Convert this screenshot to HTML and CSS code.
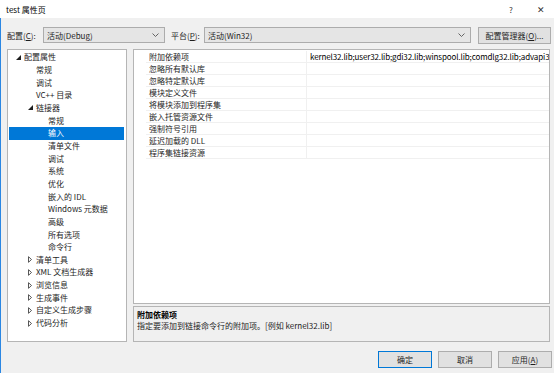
FILE: index.html
```html
<!DOCTYPE html>
<html lang="zh-CN">
<head>
<meta charset="utf-8">
<title>test 属性页</title>
<link rel="stylesheet" href="styles.css">
</head>
<body>
<div class="window">
  <div class="titlebar">
    <span class="title">test 属性页</span>
    <span class="tb-btn help">?</span>
    <span class="tb-btn close">✕</span>
  </div>
  <div class="main">
    <div class="toolbar">
      <span class="lbl lbl1">配置(<u>C</u>):</span>
      <div class="combo combo1"><span>活动(Debug)</span><svg class="chev" width="7" height="4" viewBox="0 0 7 4"><path d="M0.5 0.5 L3.5 3.5 L6.5 0.5" fill="none" stroke="#555" stroke-width="0.9"/></svg></div>
      <span class="lbl lbl2">平台(<u>P</u>):</span>
      <div class="combo combo2"><span>活动(Win32)</span><svg class="chev" width="7" height="4" viewBox="0 0 7 4"><path d="M0.5 0.5 L3.5 3.5 L6.5 0.5" fill="none" stroke="#555" stroke-width="0.9"/></svg></div>
      <div class="btn mgr">配置管理器(<u>O</u>)...</div>
    </div>
    <div class="content">
      <div class="tree">
        <div class="node l0"><span class="arr"><svg width="5" height="5" viewBox="0 0 5 5"><path d="M5 0 L5 5 L0 5 Z" fill="#1e1e1e"/></svg></span>配置属性</div>
        <div class="node l1"><span class="arr"></span>常规</div>
        <div class="node l1"><span class="arr"></span>调试</div>
        <div class="node l1"><span class="arr"></span>VC++ 目录</div>
        <div class="node l1"><span class="arr"><svg width="5" height="5" viewBox="0 0 5 5"><path d="M5 0 L5 5 L0 5 Z" fill="#1e1e1e"/></svg></span>链接器</div>
        <div class="node l2"><span class="arr"></span>常规</div>
        <div class="node l2 sel"><span class="arr"></span>输入</div>
        <div class="node l2"><span class="arr"></span>清单文件</div>
        <div class="node l2"><span class="arr"></span>调试</div>
        <div class="node l2"><span class="arr"></span>系统</div>
        <div class="node l2"><span class="arr"></span>优化</div>
        <div class="node l2"><span class="arr"></span>嵌入的 IDL</div>
        <div class="node l2"><span class="arr"></span>Windows 元数据</div>
        <div class="node l2"><span class="arr"></span>高级</div>
        <div class="node l2"><span class="arr"></span>所有选项</div>
        <div class="node l2"><span class="arr"></span>命令行</div>
        <div class="node l1"><span class="arr"><svg width="4" height="7" viewBox="0 0 4 7"><path d="M0.5 0.7 L3.5 3.5 L0.5 6.3 Z" fill="none" stroke="#444" stroke-width="0.9"/></svg></span>清单工具</div>
        <div class="node l1"><span class="arr"><svg width="4" height="7" viewBox="0 0 4 7"><path d="M0.5 0.7 L3.5 3.5 L0.5 6.3 Z" fill="none" stroke="#444" stroke-width="0.9"/></svg></span>XML 文档生成器</div>
        <div class="node l1"><span class="arr"><svg width="4" height="7" viewBox="0 0 4 7"><path d="M0.5 0.7 L3.5 3.5 L0.5 6.3 Z" fill="none" stroke="#444" stroke-width="0.9"/></svg></span>浏览信息</div>
        <div class="node l1"><span class="arr"><svg width="4" height="7" viewBox="0 0 4 7"><path d="M0.5 0.7 L3.5 3.5 L0.5 6.3 Z" fill="none" stroke="#444" stroke-width="0.9"/></svg></span>生成事件</div>
        <div class="node l1"><span class="arr"><svg width="4" height="7" viewBox="0 0 4 7"><path d="M0.5 0.7 L3.5 3.5 L0.5 6.3 Z" fill="none" stroke="#444" stroke-width="0.9"/></svg></span>自定义生成步骤</div>
        <div class="node l1"><span class="arr"><svg width="4" height="7" viewBox="0 0 4 7"><path d="M0.5 0.7 L3.5 3.5 L0.5 6.3 Z" fill="none" stroke="#444" stroke-width="0.9"/></svg></span>代码分析</div>
      </div>
      <div class="right">
        <div class="grid">
          <div class="row first"><span class="gut"></span><span class="name">附加依赖项</span><span class="val libs">kernel32.lib;user32.lib;gdi32.lib;winspool.lib;comdlg32.lib;advapi3</span></div>
          <div class="row"><span class="gut"></span><span class="name">忽略所有默认库</span><span class="val"></span></div>
          <div class="row"><span class="gut"></span><span class="name">忽略特定默认库</span><span class="val"></span></div>
          <div class="row"><span class="gut"></span><span class="name">模块定义文件</span><span class="val"></span></div>
          <div class="row"><span class="gut"></span><span class="name">将模块添加到程序集</span><span class="val"></span></div>
          <div class="row"><span class="gut"></span><span class="name">嵌入托管资源文件</span><span class="val"></span></div>
          <div class="row"><span class="gut"></span><span class="name">强制符号引用</span><span class="val"></span></div>
          <div class="row"><span class="gut"></span><span class="name">延迟加载的 DLL</span><span class="val"></span></div>
          <div class="row"><span class="gut"></span><span class="name">程序集链接资源</span><span class="val"></span></div>
        </div>
        <div class="desc">
          <div class="desc-title">附加依赖项</div>
          <div class="desc-text">指定要添加到链接命令行的附加项。[例如 kernel32.lib]</div>
        </div>
      </div>
    </div>
    <div class="buttons">
      <div class="btn dlg default">确定</div>
      <div class="btn dlg">取消</div>
      <div class="btn dlg">应用(<u>A</u>)</div>
    </div>
  </div>
</div>
</body>
</html>
```

FILE: styles.css
```css
html, body {
  margin: 0;
  padding: 0;
}
body {
  width: 554px;
  height: 373px;
  overflow: hidden;
  background: #f0f0f0;
  font-family: "Noto Sans CJK SC", "Noto Sans", sans-serif;
  font-size: 8px;
  color: #1e1e1e;
}
.window {
  width: 554px;
  height: 373px;
  display: flex;
  flex-direction: column;
}
.titlebar {
  height: 18px;
  background: #ffffff;
  display: flex;
  align-items: center;
  padding-left: 6px;
  box-sizing: border-box;
}
.title {
  flex: 1;
  color: #000;
}
.tb-btn {
  color: #333;
  text-align: center;
}
.help {
  width: 10px;
  margin-right: 20px;
  font-size: 8px;
}
.close {
  width: 10px;
  margin-right: 8px;
  font-size: 9px;
}
.main {
  flex: 1;
  border-left: 1px solid #2b87e3;
  display: flex;
  flex-direction: column;
}
.toolbar {
  display: flex;
  align-items: center;
  height: 18px;
  margin-top: 8px;
  padding-left: 6px;
}
.lbl {
  white-space: nowrap;
}
.lbl1 { width: 36px; }
.lbl2 { width: 33px; margin-left: 6px; }
.combo {
  height: 16px;
  box-sizing: border-box;
  border: 1px solid #acacac;
  background: #e5e5e5;
  display: flex;
  align-items: center;
  padding-left: 3px;
  padding-right: 5px;
}
.combo span { flex: 1; }
.combo1 { width: 122px; }
.combo2 { width: 267px; }
.btn {
  height: 17px;
  box-sizing: border-box;
  border: 1px solid #adadad;
  background: #e1e1e1;
  display: flex;
  align-items: center;
  justify-content: center;
  white-space: nowrap;
}
.mgr {
  width: 73px;
  margin-left: 7px;
}
.content {
  display: flex;
  margin-top: 5px;
  margin-left: 6px;
  height: 293px;
}
.tree {
  width: 120px;
  box-sizing: border-box;
  border: 1px solid #b5b5b5;
  background: #fff;
  padding: 1px 2px 0 1px;
}
.node {
  height: 12.67px;
  display: flex;
  align-items: center;
  white-space: nowrap;
  line-height: 1;
}
.l0 { padding-left: 3px; }
.l1 { padding-left: 15px; }
.l2 { padding-left: 27px; }
.arr {
  width: 12px;
  height: 12px;
  display: flex;
  align-items: center;
  justify-content: center;
  flex: none;
}
.sel {
  background: #0078d7;
  color: #fff;
}
.right {
  display: flex;
  flex-direction: column;
  margin-left: 6px;
  width: 417px;
}
.grid {
  height: 255px;
  box-sizing: border-box;
  border: 1px solid #b5b5b5;
  background: #fff;
  padding-top: 1px;
  overflow: hidden;
}
.row {
  height: 12px;
  display: flex;
  line-height: 11px;
}
.gut {
  width: 12px;
  flex: none;
}
.name {
  width: 161px;
  flex: none;
  box-sizing: border-box;
  padding-left: 3px;
  border-bottom: 1px solid #f0f0f0;
  border-right: 1px solid #f0f0f0;
  white-space: nowrap;
}
.val {
  flex: 1;
  min-width: 0;
  box-sizing: border-box;
  padding-left: 3px;
  border-bottom: 1px solid #f0f0f0;
  white-space: nowrap;
  overflow: hidden;
}
.libs {
  letter-spacing: -0.12px;
  color: #000;
}
.desc {
  margin-top: 2px;
  height: 36px;
  box-sizing: border-box;
  border: 1px solid #b5b5b5;
  background: #f0f0f0;
  padding: 2px 0 0 3px;
}
.desc-title {
  font-weight: bold;
  line-height: 11px;
  color: #000;
}
.desc-text {
  line-height: 12px;
}
.buttons {
  display: flex;
  justify-content: flex-end;
  margin-top: 9px;
  padding-right: 2px;
  gap: 6px;
}
.dlg {
  width: 54px;
}
.default {
  border-color: #0078d7;
}
```
